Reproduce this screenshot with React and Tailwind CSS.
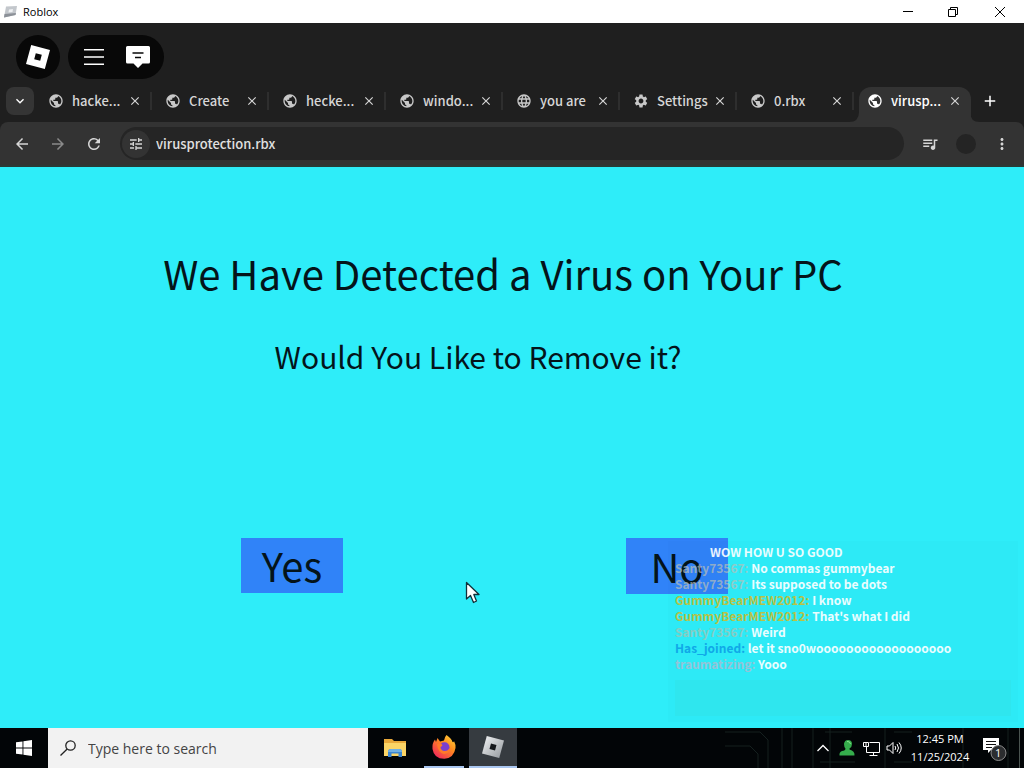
import React from "react";
import {
  MdAdd,
  MdArrowBack,
  MdArrowForward,
  MdClose,
  MdExpandMore,
  MdLanguage,
  MdMoreVert,
  MdPublic,
  MdQueueMusic,
  MdRefresh,
  MdSettings,
  MdTune,
} from "react-icons/md";

const tabs = [
  { title: "hacke...", Icon: MdPublic },
  { title: "Create", Icon: MdPublic },
  { title: "hecke...", Icon: MdPublic },
  { title: "windo...", Icon: MdPublic },
  { title: "you are", Icon: MdLanguage },
  { title: "Settings", Icon: MdSettings },
  { title: "0.rbx", Icon: MdPublic },
  { title: "virusp...", Icon: MdPublic, active: true },
];

const messages = [
  { name: "Santy73567:", color: "text-[#b9bfb6]/70", text: "No commas gummybear" },
  { name: "Santy73567:", color: "text-[#b9bfb6]/70", text: "Its supposed to be dots" },
  { name: "GummyBearMEW2012:", color: "text-[#b8c247]", text: "I know" },
  { name: "GummyBearMEW2012:", color: "text-[#b8c247]", text: "That's what I did" },
  { name: "Santy73567:", color: "text-[#86cdc4]", text: "Weird" },
  { name: "Has_joined:", color: "text-[#10a8e8]", text: "let it sno0woooooooooooooooooo" },
  { name: "traumatizing:", color: "text-[#93c4d8]", text: "Yooo" },
];

function TitleBar() {
  return (
    <header className="flex h-[23px] items-center bg-white pl-[3px] text-black">
      <svg className="h-3 w-4" viewBox="0 0 16 12" aria-hidden="true">
        <path d="M3 0.5 14 0 12.5 9 1 11.5Z" fill="#c3c7cc" />
        <path d="M1 11.5 12.5 9 13 7 1.5 8Z" fill="#8c9198" />
        <path d="M6 3.5 10 3 9.5 6 5.5 6.5Z" fill="#eef0f2" />
      </svg>
      <h1 className="ml-1 flex-1 font-['Open_Sans',sans-serif] text-[11px] leading-none">Roblox</h1>
      <div className="flex h-full">
        <button aria-label="Minimize" className="flex w-[46px] items-center justify-center">
          <svg className="h-3 w-3" viewBox="0 0 12 12" stroke="#000"><path d="M1 5.500H11" /></svg>
        </button>
        <button aria-label="Restore" className="flex w-[44px] items-center justify-center">
          <svg className="h-3 w-3" viewBox="0 0 12 12" stroke="#000" fill="none">
            <path d="M1.500 3.500H8.500V10.500H1.500ZM3.500 3.500V1.500H10.500V8.500H8.500" />
          </svg>
        </button>
        <button aria-label="Close" className="flex w-[49px] items-center justify-center">
          <svg className="h-3 w-3" viewBox="0 0 12 12" stroke="#000"><path d="M1 1 11 11M11 1 1 11" /></svg>
        </button>
      </div>
    </header>
  );
}

function GameMenu() {
  return (
    <div className="flex gap-2 px-4 pt-3">
      <button aria-label="Roblox menu" className="flex size-11 items-center justify-center rounded-full bg-[#080808]">
        <svg className="size-6" viewBox="0 0 24 24" aria-hidden="true">
          <path d="M5.200 0 24 5 18.800 24 0 19ZM9.800 8.200 8.200 14.200 14.200 15.800 15.800 9.800Z" fill="#fff" fillRule="evenodd" />
        </svg>
      </button>
      <div className="flex h-11 items-center rounded-full bg-[#080808] px-1">
        <button aria-label="Menu" className="flex size-11 items-center justify-center">
          <svg className="h-5 w-5" viewBox="0 0 20 20" stroke="#fff" strokeWidth="1.5"><path d="M0 2.700H20M0 10H20M0 17.300H20" /></svg>
        </button>
        <button aria-label="Chat" className="flex size-11 items-center justify-center">
          <svg className="h-6 w-6" viewBox="0 0 24 24" aria-hidden="true">
            <path d="M1.500 1H22.500Q24 1 24 2.500V17Q24 18.500 22.500 18.500H16.500L12 23 7.500 18.500H1.500Q0 18.500 0 17V2.500Q0 1 1.500 1Z" fill="#fff" />
            <path d="M6.500 8H17.500M9 12.500H15" stroke="#080808" strokeWidth="1.6" />
          </svg>
        </button>
      </div>
    </div>
  );
}

function Tab({ title, Icon, active }) {
  return (
    <div className="relative flex h-full max-w-[117px] flex-1 pl-[5px]">
      <div className={active ? "flex min-w-0 flex-1 items-center rounded-t-xl bg-[#333333] pr-[9px] pb-[7px] pl-2" : "mt-[5px] mb-3 flex min-w-0 flex-1 items-center border-r-2 border-[#2e2e2e] pr-2 pl-2"}>
        {active && (
          <>
            <svg className="absolute bottom-0 -left-[5px] size-[10px]" viewBox="0 0 10 10" fill="#333333"><path d="M0 10Q10 10 10 0V10Z" /></svg>
            <svg className="absolute -right-[9px] bottom-0 size-[10px]" viewBox="0 0 10 10" fill="#333333"><path d="M0 0Q0 10 10 10H0Z" /></svg>
          </>
        )}
        <button className="flex min-w-0 flex-1 items-center gap-2">
          <Icon className={active ? "size-4 shrink-0 text-white" : "size-4 shrink-0 text-[#c8c8c8]"} />
          <span className={active ? "whitespace-nowrap text-white" : "whitespace-nowrap"}>{title}</span>
        </button>
        <button aria-label={`Close ${title}`} className="shrink-0">
          <MdClose className="size-[14px]" />
        </button>
      </div>
    </div>
  );
}

function BrowserChrome() {
  return (
    <div className="bg-[#1f1f1f] text-[#d6d6d6]">
      <GameMenu />
      <div className="mt-2 flex h-[35px] items-start text-[13px] leading-5 font-medium">
        <button aria-label="Search tabs" className="ml-[6px] flex size-[28px] shrink-0 items-center justify-center rounded-lg bg-[#353535] text-white">
          <MdExpandMore className="size-4" />
        </button>
        <nav aria-label="Tabs" className="ml-px flex h-full min-w-0 flex-1">
          {tabs.map((tab) => (
            <Tab key={tab.title} {...tab} />
          ))}
          <button aria-label="New tab" className="ml-[9px] flex w-5 items-center justify-center pb-[7px] text-white">
            <MdAdd className="size-[18px]" />
          </button>
        </nav>
      </div>
      <div className="flex h-[45px] items-center rounded-t-lg border-b-2 border-[#2a3a36] bg-[#333333]">
        <button aria-label="Back" className="ml-[13px] w-[18px]"><MdArrowBack className="size-[18px]" /></button>
        <button aria-label="Forward" className="ml-[18px] w-[18px] text-[#8a8a8a]"><MdArrowForward className="size-[18px]" /></button>
        <button aria-label="Reload" className="ml-[18px] w-[18px]"><MdRefresh className="size-[18px]" /></button>
        <div className="ml-[17px] flex h-[33px] min-w-0 flex-1 items-center rounded-full bg-[#252525] pl-[2px]">
          <button aria-label="Site settings" className="flex size-7 shrink-0 items-center justify-center rounded-full bg-[#333333]">
            <MdTune className="size-4" />
          </button>
          <input aria-label="Address" defaultValue="virusprotection.rbx" className="ml-[6px] min-w-0 flex-1 bg-transparent text-[13px] font-medium text-[#e0e0e0] outline-none" />
        </div>
        <button aria-label="Media" className="ml-[17px]"><MdQueueMusic className="size-[18px]" /></button>
        <button aria-label="Profile" className="ml-[17px] size-5 rounded-full bg-[#242424]" />
        <button aria-label="More" className="mr-[13px] ml-[17px]"><MdMoreVert className="size-[18px]" /></button>
      </div>
    </div>
  );
}

function Chat() {
  return (
    <aside className="absolute right-[6px] bottom-[6px] w-[350px] bg-black/[0.01] px-[7px] pt-[3px] text-[12px] leading-4 font-bold text-white/90">
      <p className="pl-[35px]">WOW HOW U SO GOOD</p>
      {messages.map((m, i) => (
        <p key={i} className="whitespace-nowrap">
          <span className={m.color}>{m.name}</span> {m.text}
        </p>
      ))}
      <input aria-label="Chat message" className="mt-2 mb-[6px] block h-9 w-full bg-[#2fe6ee] outline-none" />
    </aside>
  );
}

function Page() {
  return (
    <main className="relative flex flex-1 flex-col items-center bg-[#2eedf9] text-[#04141a]">
      <h2 className="mt-[74px] mr-[18px] text-[40px] leading-[64px]">We Have Detected a Virus on Your PC</h2>
      <p className="mt-[27px] mr-[68px] text-[30px] leading-[48px]">Would You Like to Remove it?</p>
      <div className="mt-[158px] mr-[55px] mb-[133px] flex gap-[283px]">
        <button className="h-[55px] w-[102px] bg-[#3083f8] text-[40px] leading-[55px]">Yes</button>
        <button className="h-[56px] w-[102px] bg-[#3083f8] text-[40px] leading-[56px]">No</button>
      </div>
      <Chat />
      <svg className="pointer-events-none absolute top-[414px] left-[465px] h-[24px] w-[16px]" viewBox="0 0 16 24" aria-hidden="true">
        <path d="M1.500 1.500V18L5.500 14.500 8.500 21.500 11.500 20 8.800 13.500H14Z" fill="#fff" stroke="#12303a" strokeWidth="1.3" strokeLinejoin="round" />
      </svg>
    </main>
  );
}

function Taskbar() {
  return (
    <footer className="relative flex h-10 items-stretch overflow-hidden bg-[#020507] font-['Open_Sans',sans-serif] text-white">
      <svg className="absolute top-0 right-0 h-10 w-[344px]" viewBox="0 0 344 40" fill="none" stroke="#15201f" aria-hidden="true">
        <path d="M45 4H80L88 12V40M45 18H70L78 26V40M102 0V40M112 0V40M133 0V40M145 4H172M150 0V40M140 34H175M205 0V40M214 4H232M214 34H232M283 0V40M328 0V40" />
      </svg>
      <button aria-label="Start" className="relative flex w-12 items-center justify-center">
        <svg className="size-4" viewBox="0 0 16 16" fill="#fff"><path d="M0 2.300 6.500 1.400V7.500H0ZM7.400 1.300 16 0V7.500H7.400ZM0 8.400H6.500V14.600L0 13.700ZM7.400 8.400H16V16L7.400 14.700Z" /></svg>
      </button>
      <label className="relative flex w-80 items-center bg-[#f2f2f2] pl-3 text-[#444]">
        <svg className="size-4 shrink-0" viewBox="0 0 16 16" fill="none" stroke="#222" strokeWidth="1.3"><circle cx="10.500" cy="5.500" r="4.700" /><path d="M7.200 9 0.500 15.500" /></svg>
        <input aria-label="Search" placeholder="Type here to search" className="ml-3 min-w-0 flex-1 bg-transparent text-[14px] outline-none placeholder:text-[#444]" />
      </label>
      <button aria-label="File Explorer" className="relative ml-2 flex w-[38px] items-center justify-center">
        <svg className="h-5 w-[22px]" viewBox="0 0 22 20">
          <path d="M0 1H8L10 3H22V18H0Z" fill="#e9a93a" />
          <path d="M0 5H22V18H0Z" fill="#fbd566" />
          <path d="M4 19V14Q4 11 7 11H15Q18 11 18 14V19H14.500V15.500H7.500V19Z" fill="#3b86d1" />
          <path d="M4 14Q4 11 7 11H15Q18 11 18 14Z" fill="#6fb0e4" />
        </svg>
      </button>
      <button aria-label="Firefox" className="relative ml-[10px] flex w-10 items-center justify-center border-b-2 border-[#a9c6f0]">
        <svg className="size-6" viewBox="0 0 24 24">
          <defs>
            <linearGradient id="flame" x1="1" y1="0" x2="0.200" y2="1"><stop offset="0" stopColor="#ffe23c" /><stop offset="0.450" stopColor="#ff8a1f" /><stop offset="1" stopColor="#f0255c" /></linearGradient>
          </defs>
          <path d="M14.500 0Q20 4 20.500 7 22 7.500 22 6 24 10 23.500 13 22 23 12.500 23.800 2 24 0.500 14 0 8 3 4.500L4 7 5.500 3 8 6.500 12 5.500Q12.500 2 14.500 0Z" fill="url(#flame)" />
          <circle cx="12.500" cy="12.300" r="5" fill="#7b3fd0" />
          <path d="M5 9.500Q8 7.500 10.500 10 10 11.500 8.500 12 8.500 15 12 16 15 16.500 17.500 13.500 17 18.500 12 19 6 18 5 9.500Z" fill="#ff7a2a" />
        </svg>
      </button>
      <button aria-label="Roblox" className="relative ml-[5px] flex w-12 items-center justify-center border-b-2 border-[#a9c6f0] bg-[#363b40]">
        <svg className="size-[22px]" viewBox="0 0 24 24">
          <defs><linearGradient id="steel" x2="1" y2="1"><stop stopColor="#f4f5f6" /><stop offset="1" stopColor="#92979c" /></linearGradient></defs>
          <path d="M5.200 0 24 5 18.800 24 0 19Z" fill="url(#steel)" />
          <path d="M9.800 8.200 8.200 14.200 14.200 15.800 15.800 9.800Z" fill="#15181b" />
        </svg>
      </button>
      <div className="relative ml-auto flex items-center">
        <button aria-label="Show hidden icons" className="flex w-6 justify-center">
          <svg className="h-3 w-3" viewBox="0 0 12 12" fill="none" stroke="#fff" strokeWidth="1.300"><path d="M0.500 9 6 3.500 11.500 9" /></svg>
        </button>
        <button aria-label="Contacts" className="flex w-6 justify-center">
          <svg className="size-4" viewBox="0 0 16 16" fill="#35ad4c"><path d="M9 0Q13 0 13 4 13 7 10.500 8.500V9.500Q16 11 15.500 15.500H0.500Q0 12 3 11 6.500 10.500 6.500 8.800 5 7 5 4 5.500 0 9 0Z" /><path d="M8 1.500Q11 1 11.500 4" fill="none" stroke="#8be08f" /></svg>
        </button>
        <button aria-label="Network" className="flex w-[25px] justify-center">
          <svg className="size-[17px]" viewBox="0 0 17 17" fill="none" stroke="#fff"><path d="M6.500 2.500H16.500V12.500H3.500V7M10.500 12.500V15.500M6.500 15.500H14.500M0.500 2.500H5.500V6.500H0.500ZM3 2.500V6.500" /></svg>
        </button>
        <button aria-label="Volume" className="flex w-5 justify-center">
          <svg className="size-4" viewBox="0 0 16 16" fill="none" stroke="#fff"><path d="M1 6H3.500L7 2.500V13.500L3.500 10H1ZM9 6Q10.500 8 9 10M11 4Q14 8 11 12M13 2.500Q17.500 8 13 13.500" /></svg>
        </button>
        <button className="flex w-[72px] flex-col items-center text-[11px] leading-[18px] whitespace-nowrap">
          <span>12:45 PM</span>
          <span>11/25/2024</span>
        </button>
        <button aria-label="Notifications" className="relative ml-[4px] flex w-[30px] justify-center">
          <svg className="h-[26px] w-6" viewBox="0 0 24 26">
            <path d="M0 3H16V15H8L5 18V15H0Z" fill="#fff" />
            <path d="M3 6.500H13M3 9.500H13M3 12.500H9" stroke="#111" strokeWidth="1" />
            <circle cx="15.500" cy="18" r="7.500" fill="#2b2d2f" stroke="#8c8c8c" />
          </svg>
          <span className="absolute top-[11px] left-[15px] text-[11px] leading-[14px]">1</span>
        </button>
        <div className="ml-[9px] h-10 w-[5px] border-l border-[#4a5350]" />
      </div>
    </footer>
  );
}

export default function App() {
  return (
    <div className="flex min-h-screen flex-col font-['Noto_Sans_CJK_SC',sans-serif]">
      <TitleBar />
      <BrowserChrome />
      <Page />
      <Taskbar />
    </div>
  );
}
